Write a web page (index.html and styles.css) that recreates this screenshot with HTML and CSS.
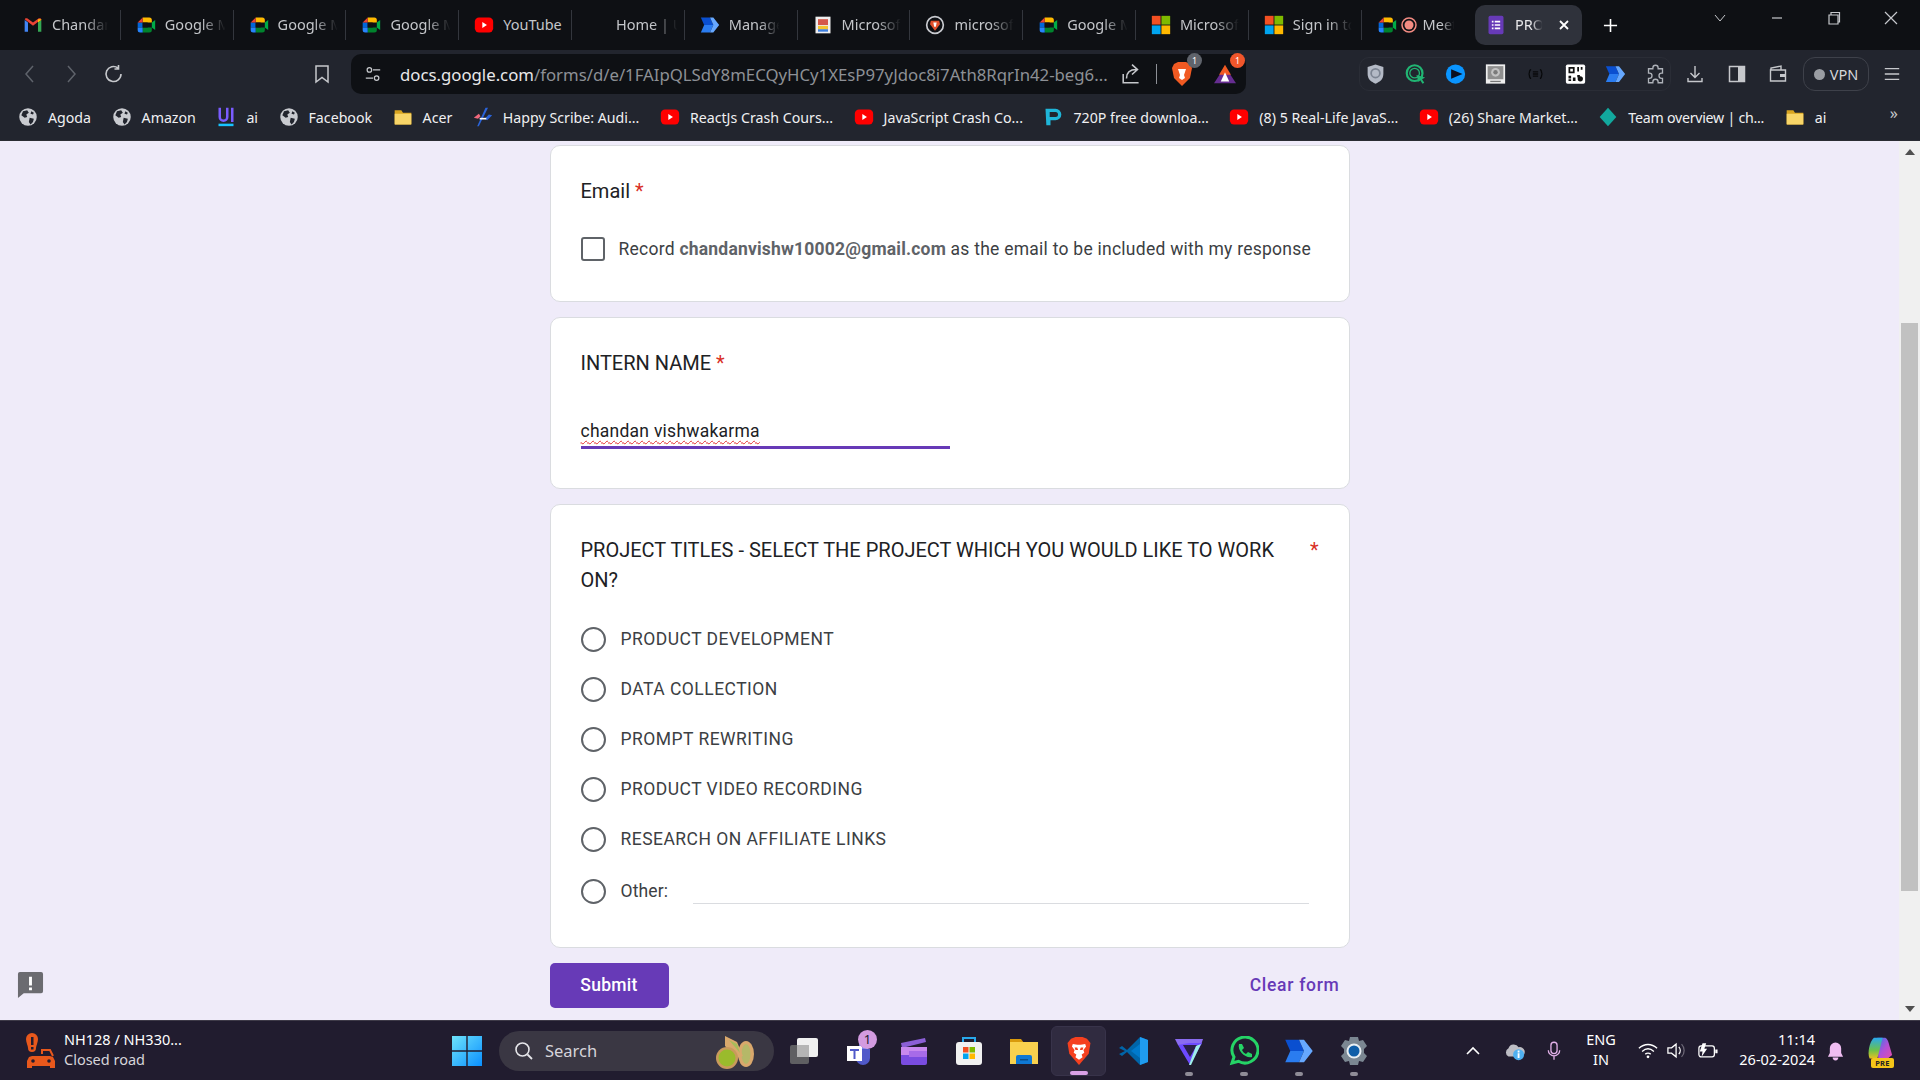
FILE: index.html
```html
<!DOCTYPE html>
<html lang="en">
<head>
<meta charset="utf-8">
<title>PROJECT form</title>
<link rel="stylesheet" href="styles.css">
</head>
<body>
<svg class="defs" width="0" height="0" aria-hidden="true">
  <defs>
    <symbol id="meet" viewBox="0 0 24 24"><path fill="#00832d" d="M13 9v6h6v3a3 3 0 0 1-3 3H8v-6h5z"/><path fill="#0066da" d="M2 9h6v6H2z"/><path fill="#2684fc" d="M2 15h6v6H5a3 3 0 0 1-3-3z"/><path fill="#ffba00" d="M8 3h8a3 3 0 0 1 3 3v3h-6v0H8z"/><path fill="#ea4335" d="M8 3v6H2z"/><path fill="#00ac47" d="M19 9l4-3v12l-4-3z"/><path fill="#111" d="M8 9h6v6H8z"/></symbol>
    <symbol id="yt" viewBox="0 0 24 24"><rect x="1" y="3" width="22" height="18" rx="5" fill="#f00"/><path d="M10 8.500l5.500 3.500-5.500 3.500z" fill="#fff"/></symbol>
    <symbol id="ms" viewBox="0 0 24 24"><path fill="#f25022" d="M1 1h10.500v10.500H1z"/><path fill="#7fba00" d="M12.500 1H23v10.500H12.500z"/><path fill="#00a4ef" d="M1 12.500h10.500V23H1z"/><path fill="#ffb900" d="M12.500 12.500H23V23H12.500z"/></symbol>
    <symbol id="pa" viewBox="0 0 24 24"><path fill="#0a4fd0" d="M1 3h11l4 9H5z"/><path fill="#2a7cf0" d="M5 12h11l-4 9H1z"/><path fill="#66a8ff" d="M12 3h4l7 9-7 9h-4l4-9z"/></symbol>
    <symbol id="globe" viewBox="0 0 24 24"><circle cx="12" cy="12" r="10.500" fill="#c9cbd0"/><path fill="#22252e" d="M6 5l5-1 2 3-3 2 1 3-3 1-4-3zM14 13l5 1-1 4-3 3-2-3zM16 5l3 2-1 2-3-1z"/></symbol>
    <symbol id="folder" viewBox="0 0 24 24"><path fill="#d9a520" d="M2 4h8l2 3h10v14H2z"/><path fill="#f8d568" d="M2 8h20v12a1 1 0 0 1-1 1H3a1 1 0 0 1-1-1z"/></symbol>
  </defs>
</svg>
<div class="app">
  <header class="tabstrip">
    <div class="tabs">
      <div class="tab"><svg class="tab-ico" viewBox="0 0 24 24"><path fill="#4285f4" d="M2 20V6l4 3v11z"/><path fill="#34a853" d="M18 20V9l4-3v14z"/><path fill="#ea4335" d="M2 5l10 8 10-8-1-1-2 0-7 5-7-5H3z"/><path fill="#fbbc04" d="M18 9l4-3V5l-4 0z"/></svg><span class="tab-label">Chandan</span></div>
      <div class="tab"><svg class="tab-ico"><use href="#meet"/></svg><span class="tab-label">Google M</span></div>
      <div class="tab"><svg class="tab-ico"><use href="#meet"/></svg><span class="tab-label">Google M</span></div>
      <div class="tab"><svg class="tab-ico"><use href="#meet"/></svg><span class="tab-label">Google M</span></div>
      <div class="tab"><svg class="tab-ico"><use href="#yt"/></svg><span class="tab-label tab-label-solid">YouTube</span></div>
      <div class="tab"><span class="tab-ico"></span><span class="tab-label">Home | U</span></div>
      <div class="tab"><svg class="tab-ico"><use href="#pa"/></svg><span class="tab-label">Manage</span></div>
      <div class="tab"><svg class="tab-ico" viewBox="0 0 24 24"><path fill="#eee" d="M3 2h18v20H3z"/><path fill="#d5584a" d="M6 5h12v7H6z"/><path fill="#3c7ee0" d="M6 17h12v3H6z"/><path fill="#f4c430" d="M6 13h12v4H6z"/></svg><span class="tab-label">Microsoft</span></div>
      <div class="tab"><svg class="tab-ico" viewBox="0 0 24 24"><circle cx="12" cy="12" r="10" fill="none" stroke="#c9cbd0" stroke-width="2"/><path fill="#e2502b" d="M7 7h10l1 4-6 8-6-8z"/><path fill="#fff" d="M10 9h4l-1 5h-2z"/></svg><span class="tab-label">microsoft</span></div>
      <div class="tab"><svg class="tab-ico"><use href="#meet"/></svg><span class="tab-label">Google M</span></div>
      <div class="tab"><svg class="tab-ico"><use href="#ms"/></svg><span class="tab-label">Microsoft</span></div>
      <div class="tab"><svg class="tab-ico"><use href="#ms"/></svg><span class="tab-label">Sign in to</span></div>
      <div class="tab tab-rec"><svg class="tab-ico"><use href="#meet"/></svg><svg class="tab-rec-dot" viewBox="0 0 16 16"><circle cx="8" cy="8" r="7" fill="none" stroke="#f28b82" stroke-width="1.500"/><circle cx="8" cy="8" r="4.500" fill="#f28b82"/></svg><span class="tab-label">Meet</span></div>
    </div>
    <div class="tab-active">
      <svg class="tab-ico" viewBox="0 0 24 24"><rect x="3" y="1" width="18" height="22" rx="2" fill="#673ab7"/><path fill="#fff" d="M7 7h2v2H7zM10.500 7H17v2h-6.500zM7 11h2v2H7zM10.500 11H17v2h-6.500zM7 15h2v2H7zM10.500 15H17v2h-6.500z"/></svg>
      <span class="tab-label tab-label-active">PRO</span>
      <svg class="tab-close" viewBox="0 0 12 12"><path d="M2 2l8 8M10 2l-8 8" stroke="#fff" stroke-width="1.800"/></svg>
    </div>
    <svg class="tab-new" viewBox="0 0 16 16"><path d="M8 1v14M1 8h14" stroke="#fff" stroke-width="1.700"/></svg>
    <div class="win-ctrls">
      <svg viewBox="0 0 16 16"><path d="M3 5l5 6 5-6" fill="none" stroke="#c6c8cc" stroke-width="1"/></svg>
      <svg viewBox="0 0 16 16"><path d="M3 8h10" stroke="#c6c8cc" stroke-width="1.200"/></svg>
      <svg viewBox="0 0 16 16"><path d="M3 5h9v9H3zM5 5V2.500h8.500V12H12" fill="none" stroke="#c6c8cc" stroke-width="1.200"/></svg>
      <svg viewBox="0 0 16 16"><path d="M2 2l12 12M14 2L2 14" stroke="#c6c8cc" stroke-width="1.200"/></svg>
    </div>
  </header>

  <nav class="toolbar">
    <div class="nav-btns">
      <svg class="nav-ico dim" viewBox="0 0 20 20"><path d="M13 2l-7 8 7 8" fill="none" stroke="currentColor" stroke-width="1.500"/></svg>
      <svg class="nav-ico dim" viewBox="0 0 20 20"><path d="M7 2l7 8-7 8" fill="none" stroke="currentColor" stroke-width="1.500"/></svg>
      <svg class="nav-ico reload" viewBox="0 0 20 20"><path d="M17 10a7.500 7.500 0 1 1-3-6M14.500 1v4h-4" fill="none" stroke="currentColor" stroke-width="1.600"/></svg>
    </div>
    <svg class="nav-ico bookmark" viewBox="0 0 20 20"><path d="M4 2h12v16l-6-4.500L4 18z" fill="none" stroke="currentColor" stroke-width="1.500"/></svg>
    <div class="omnibox">
      <svg class="site-ico" viewBox="0 0 20 20"><g fill="none" stroke="#c6c8cc" stroke-width="1.400"><circle cx="6" cy="5.500" r="2.500"/><path d="M10 5.500h8M2 14.500h8"/><circle cx="14" cy="14.500" r="2.500"/></g></svg>
      <div class="url"><span class="url-host">docs.google.com</span>/forms/d/e/1FAIpQLSdY8mECQyHCy1XEsP97yJdoc8i7Ath8RqrIn42-beg6...</div>
      <svg class="omni-share" viewBox="0 0 20 20"><path d="M2 10v8h14M5 14c0-5 3-8 9-8M10 1.500l5 4.500-5 4.500" fill="none" stroke="#c6c8cc" stroke-width="1.400"/></svg>
      <span class="omni-sep"></span>
      <div class="shield-wrap">
        <svg class="omni-shield" viewBox="0 0 22 26"><path fill="#f15a22" d="M3 3l4-2h8l4 2 2 4-2 10-8 8-8-8L1 7z"/><path fill="#fff" d="M7 8h8l-2 6 1 3-3 2-3-2 1-3z"/></svg>
        <span class="badge badge-grey">1</span>
      </div>
      <div class="shield-wrap">
        <svg class="omni-shield" viewBox="0 0 26 26"><path fill="#662d91" d="M13 4L26 24H0z"/><path fill="#f15a22" d="M13 2L20 14H6z"/><path fill="#fff" d="M13 11l5 11H8z"/></svg>
        <span class="badge badge-red">1</span>
      </div>
    </div>
    <div class="ext-group">
      <svg class="ext" viewBox="0 0 24 24"><path fill="#b4bac6" d="M12 1l9 3v8c0 6-4 9-9 11-5-2-9-5-9-11V4z"/><circle cx="12" cy="11" r="5" fill="none" stroke="#7c8492" stroke-width="2"/></svg>
      <svg class="ext" viewBox="0 0 24 24"><circle cx="11" cy="11" r="9" fill="none" stroke="#21b573" stroke-width="2.500"/><circle cx="11" cy="11" r="5.500" fill="none" stroke="#21b573" stroke-width="1.500"/><path fill="#21b573" d="M13 13l10 3-3.500 2 2.500 4-2 1-2.500-4-2 2z"/></svg>
      <svg class="ext" viewBox="0 0 24 24"><circle cx="12" cy="12" r="11" fill="#0a95ff"/><path fill="#0b1020" d="M7 6.500L20 12 7 17.500z"/></svg>
      <svg class="ext" viewBox="0 0 24 24"><rect x="1" y="1" width="22" height="22" fill="#eeeeee"/><rect x="3" y="3" width="18" height="15" fill="#8f8f8f"/><circle cx="12" cy="10" r="5" fill="#c2c2c2"/><circle cx="12" cy="10" r="2.500" fill="#7a7a7a"/><path d="M6 20.500h12" stroke="#777" stroke-width="1.500"/></svg>
      <svg class="ext" viewBox="0 0 24 24"><path d="M7 7c-3 0-1 5-3 5 2 0 0 5 3 5M17 7c3 0 1 5 3 5-2 0 0 5-3 5M9 9.500h6M9 12h6M9 14.500h6" fill="none" stroke="#08090b" stroke-width="1.500"/></svg>
      <svg class="ext" viewBox="0 0 24 24"><rect x="1" y="1" width="22" height="22" rx="2" fill="#fff"/><path fill="#111" fill-rule="evenodd" d="M4 4h7v7H4zM6 6v3h3V6zM14 4h2v5h-2zM18 4h2v3h-2zM4 14h3v3H4zM9 16h3v4H9zM4 18h3v2H4zM14 13h3v3h-3z"/><circle cx="17.500" cy="17.500" r="3" fill="#111"/></svg>
      <svg class="ext"><use href="#pa"/></svg>
      <svg class="ext" viewBox="0 0 24 24"><path d="M9 5a3 3 0 0 1 6 0v1h5v5h-1a3 3 0 0 0 0 6h1v5h-5v-1a3 3 0 0 0-6 0v1H4v-5h1a3 3 0 0 0 0-6H4V6h5z" fill="none" stroke="#aeb2b9" stroke-width="1.500"/></svg>
    </div>
    <div class="tool-icons">
      <svg class="tool" viewBox="0 0 20 20"><path d="M10 2v11M5.500 9l4.500 4.500L14.500 9M3 14v3.500h14V14" fill="none" stroke="#c6c8cc" stroke-width="1.400"/></svg>
      <svg class="tool" viewBox="0 0 20 20"><rect x="2.500" y="2.500" width="15" height="15" fill="none" stroke="#c6c8cc" stroke-width="1.500"/><path fill="#c6c8cc" d="M11 3h6v14h-6z"/></svg>
      <svg class="tool" viewBox="0 0 20 20"><path d="M3 6V4l10-2v4M2.500 6h15v11h-15z" fill="none" stroke="#c6c8cc" stroke-width="1.400"/><path fill="#c6c8cc" d="M12 10h5v3h-5z"/></svg>
    </div>
    <div class="vpn"><span class="vpn-dot"></span>VPN</div>
    <svg class="menu" viewBox="0 0 20 20"><path d="M2 4h16M2 10h16M2 16h16" stroke="#c6c8cc" stroke-width="1.500"/></svg>
  </nav>

  <nav class="bookmarks">
    <a class="bm"><svg><use href="#globe"/></svg>Agoda</a>
    <a class="bm"><svg><use href="#globe"/></svg>Amazon</a>
    <a class="bm"><svg viewBox="0 0 24 24"><path fill="#7a5cff" d="M3 1h3v11a2 2 0 0 0 6 0V1h3v11a5 5 0 0 1-12 0zM18 1h3v17h-3z"/><path fill="#17c3ff" d="M3 20h18v3H3z"/></svg>ai</a>
    <a class="bm"><svg><use href="#globe"/></svg>Facebook</a>
    <a class="bm"><svg><use href="#folder"/></svg>Acer</a>
    <a class="bm"><svg viewBox="0 0 24 24"><path fill="#f2697d" d="M1 13l6-5 2 3-3 3z"/><path fill="#2a63d8" d="M15 1h3L7 23H5zM23 10l-6 6-3-2 5-5z"/><path fill="#fff" d="M8 13h8v2H8z"/></svg>Happy Scribe: Audi...</a>
    <a class="bm"><svg><use href="#yt"/></svg>ReactJs Crash Cours...</a>
    <a class="bm"><svg><use href="#yt"/></svg>JavaScript Crash Co...</a>
    <a class="bm"><svg viewBox="0 0 24 24"><path fill="#1fb6d9" d="M3 2h12a7 7 0 0 1 0 14H9v6H4z"/><path fill="#22252e" d="M8 6h7a3 3 0 0 1 0 6H8z"/></svg>720P free downloa...</a>
    <a class="bm"><svg><use href="#yt"/></svg>(8) 5 Real-Life JavaS...</a>
    <a class="bm"><svg><use href="#yt"/></svg>(26) Share Market...</a>
    <a class="bm bm-tight"><svg viewBox="0 0 24 24"><path fill="#12a89d" d="M12 1l10 11-10 11L2 12z"/></svg>Team overview | ch...</a>
    <a class="bm"><svg><use href="#folder"/></svg>ai</a>
    <span class="bm-more">»</span>
  </nav>

  <main class="viewport">
    <div class="page">
      <div class="form">
        <section class="card">
          <h2 class="q">Email <span class="req">*</span></h2>
          <div class="record">
            <span class="checkbox"></span>
            <span>Record <b class="mail">chandanvishw10002@gmail.com</b> as the email to be included with my response</span>
          </div>
        </section>
        <section class="card card-name">
          <h2 class="q">INTERN NAME <span class="req">*</span></h2>
          <div class="answer"><span class="spell">chandan vishwakarma</span></div>
        </section>
        <section class="card card-project">
          <div class="q-row">
            <h2 class="q q-long">PROJECT TITLES - SELECT THE PROJECT WHICH YOU WOULD LIKE TO WORK ON?</h2>
            <span class="req req-far">*</span>
          </div>
          <div class="opts">
            <div class="opt"><span class="radio"></span>PRODUCT DEVELOPMENT</div>
            <div class="opt"><span class="radio"></span>DATA COLLECTION</div>
            <div class="opt"><span class="radio"></span>PROMPT REWRITING</div>
            <div class="opt"><span class="radio"></span>PRODUCT VIDEO RECORDING</div>
            <div class="opt"><span class="radio"></span>RESEARCH ON AFFILIATE LINKS</div>
            <div class="opt opt-other"><span class="radio"></span>Other:<span class="other-line"></span></div>
          </div>
        </section>
        <div class="actions">
          <button class="submit" type="button">Submit</button>
          <span class="clear">Clear form</span>
        </div>
      </div>
      <svg class="feedback" viewBox="0 0 28 28"><path fill="#6b6b70" d="M3 1h22a2 2 0 0 1 2 2v18a2 2 0 0 1-2 2H7l-6 5V3a2 2 0 0 1 2-2z"/><path fill="#fff" d="M12.500 6h3v9h-3zM12.500 17h3v3h-3z"/></svg>
    </div>
    <div class="scrollbar">
      <svg class="sb-arrow" viewBox="0 0 10 6"><path d="M5 0l5 6H0z" fill="#505050"/></svg>
      <div class="sb-track"><div class="sb-thumb"></div></div>
      <svg class="sb-arrow" viewBox="0 0 10 6"><path d="M0 0h10L5 6z" fill="#505050"/></svg>
    </div>
  </main>

  <footer class="taskbar">
    <div class="tb-left">
      <div class="traffic">
        <svg class="traffic-ico" viewBox="0 0 32 38"><path fill="#e8581c" d="M8 1a6 6 0 0 1 6 6c0 3-2 7-2 9a4 4 0 0 1-8 0c0-2-2-6-2-9a6 6 0 0 1 6-6z"/><path fill="#211c2f" d="M7 5h2.500v8H7zM7 15h2.500v2.500H7z"/><path fill="#e8581c" d="M5 25l3-1h18l3 1 2 4v7h-5v-2H8v2H3v-7z"/><path fill="none" stroke="#e8581c" stroke-width="2" d="M18 22v-4h8l3 6"/><circle cx="9" cy="29" r="1.800" fill="#211c2f"/><circle cx="25" cy="29" r="1.800" fill="#211c2f"/></svg>
        <div class="traffic-text"><div class="traffic-t1">NH128 / NH330...</div><div class="traffic-t2">Closed road</div></div>
      </div>
    </div>
    <div class="tb-center">
      <svg class="win" viewBox="0 0 30 30"><defs><linearGradient id="w" x1="0" y1="0" x2="1" y2="1"><stop offset="0" stop-color="#6ee3fb"/><stop offset="1" stop-color="#0a8fff"/></linearGradient></defs><path fill="url(#w)" d="M0 0h14.300v14.300H0zM15.700 0H30v14.300H15.700zM0 15.700h14.300V30H0zM15.700 15.700H30V30H15.700z"/></svg>
      <div class="search">
        <svg class="search-ico" viewBox="0 0 20 20"><circle cx="8.500" cy="8.500" r="6.500" fill="none" stroke="#e6e6ea" stroke-width="1.600"/><path d="M13.500 13.500L18 18" stroke="#e6e6ea" stroke-width="1.800"/></svg>
        <span class="search-text">Search</span>
        <svg class="search-art" viewBox="0 0 48 36"><ellipse cx="35" cy="21" rx="8" ry="13" fill="#d9a86c"/><ellipse cx="35" cy="21" rx="4.500" ry="10" fill="#b5b868"/><path fill="#d9a86c" d="M14 3l12 6 6 14-6 2-12-12z"/><path fill="#a6bc5a" d="M18 7l8 4 3 9z"/><circle cx="16" cy="25" r="11" fill="#c99a5c"/><circle cx="16" cy="25" r="8.500" fill="#9abb2c"/></svg>
      </div>
      <div class="apps">
        <div class="app-slot"><svg viewBox="0 0 30 30"><rect x="1" y="9" width="19" height="19" rx="2" fill="#5f5f62"/><rect x="8" y="2" width="21" height="19" rx="2" fill="#f0f0f0"/><rect x="8" y="9" width="12" height="12" fill="#b5b5b5"/></svg></div>
        <div class="app-slot app-teams"><svg viewBox="0 0 30 30"><circle cx="20" cy="9" r="5" fill="#7b83eb"/><path fill="#5059c9" d="M12 13h14v9a7 7 0 0 1-14 0z"/><rect x="3" y="10" width="15" height="15" fill="#fff"/><path fill="#5059c9" d="M6 13h9v2h-3.500v8h-2v-8H6z"/></svg><span class="teams-badge">1</span></div>
        <div class="app-slot"><svg viewBox="0 0 30 30"><path fill="#8b5fd6" d="M2 7l24-5 1 4L3 12z"/><path fill="#c889ee" d="M2 11h26v8H2z"/><path fill="#7a4ce0" d="M2 19h26v8a2 2 0 0 1-2 2H4a2 2 0 0 1-2-2z"/><path fill="#a76be8" d="M10 15h18v6H10z"/></svg></div>
        <div class="app-slot"><svg viewBox="0 0 30 30"><path fill="none" stroke="#28a8ea" stroke-width="2" d="M9 7V2h12v5"/><rect x="2" y="6" width="26" height="23" rx="3" fill="#f1f1f1"/><path fill="#f25022" d="M9 11h5.500v5.500H9z"/><path fill="#7fba00" d="M15.500 11H21v5.500h-5.500z"/><path fill="#00a4ef" d="M9 17.500h5.500V23H9z"/><path fill="#ffb900" d="M15.500 17.500H21V23h-5.500z"/></svg></div>
        <div class="app-slot"><svg viewBox="0 0 30 30"><path fill="#d99a0c" d="M1 3h11l3 4h-14z"/><path fill="#f9d14e" d="M1 6h28v22H1z"/><path fill="#0f78d4" d="M9 19h12a2 2 0 0 1 2 2v7H7v-7a2 2 0 0 1 2-2z"/><path fill="#0b4f8c" d="M11 23h8v1.500h-8z"/></svg></div>
        <div class="app-slot is-active"><svg viewBox="0 0 30 34"><path fill="#f5401f" d="M6 3l5-2h8l5 2 4 5-2 12-11 13L4 20 2 8z"/><path fill="#fff" d="M8 9l5 1h4l5-1 1 3-3 4 1 3-3 2 1 3-4 3-4-3 1-3-3-2 1-3-3-4z"/><path fill="#f5401f" d="M10 13h3l1 3h-3zM20 13h-3l-1 3h3z"/></svg><span class="dot dot-active"></span></div>
        <div class="app-slot"><svg viewBox="0 0 30 30"><path fill="#0065a9" d="M21 1L8 14 3 10 0 12l6 3-6 3 3 2 5-4 13 13 8-3V4z"/><path fill="#1f9cf0" d="M21 1l8 3v22l-8 3z"/><path fill="#007acc" d="M21 8v14l-9-7z"/></svg></div>
        <div class="app-slot"><svg viewBox="0 0 30 30"><path fill="#8a6cf0" d="M1 3h28l-2 6H4z"/><path fill="#6d4aff" d="M4 9l11-2 13 0-12 22z"/><path fill="#2a1f4a" d="M9 9h14l-7 12z"/><path fill="#9fefe9" d="M22 10l5-2-10 21h-2z"/></svg><span class="dot"></span></div>
        <div class="app-slot"><svg viewBox="0 0 30 30"><path fill="none" stroke="#25d366" stroke-width="3" d="M3 27l2-6a13 13 0 1 1 4.500 4.300z"/><path fill="#25d366" d="M10 8h3l2 4-2 2c1 2 2 3 4 4l2-2 4 2v3c-6 2-15-6-13-13z"/></svg><span class="dot"></span></div>
        <div class="app-slot"><svg viewBox="0 0 24 24"><use href="#pa"/></svg><span class="dot"></span></div>
        <div class="app-slot"><svg viewBox="0 0 30 30"><path fill="#7b8792" d="M11 1h8l1 4 4-1 4 6-3 3v4l3 3-4 6-4-1-1 4h-8l-1-4-4 1-4-6 3-3v-4L2 10l4-6 4 1z"/><circle cx="15" cy="15" r="7.500" fill="#e8eef2"/><circle cx="15" cy="15" r="5.500" fill="#0f5ea8"/></svg><span class="dot"></span></div>
      </div>
    </div>
    <div class="tb-tray">
      <svg class="tray-ico chev" viewBox="0 0 16 16"><path d="M2 11l6-6 6 6" fill="none" stroke="#fff" stroke-width="1.600"/></svg>
      <div class="tray-cloud"><svg class="tray-ico" viewBox="0 0 24 20"><path fill="#bdbdc4" d="M6 16a5 5 0 0 1 0-9 6 6 0 0 1 11-1 5 5 0 0 1 3 10z"/><circle cx="17" cy="14" r="6" fill="#4fb0f0"/><path fill="#fff" d="M16 9.500h2v2h-2zM16 12.500h2v5h-2z"/></svg></div>
      <svg class="tray-ico mic" viewBox="0 0 16 22"><rect x="4.500" y="1" width="7" height="13" rx="3.500" fill="none" stroke="#e2b0e8" stroke-width="1.500"/><path d="M1.500 10a6.500 6.500 0 0 0 13 0M8 17v4" fill="none" stroke="#e2b0e8" stroke-width="1.500"/></svg>
      <div class="lang"><div>ENG</div><div>IN</div></div>
      <svg class="tray-ico wifi" viewBox="0 0 22 18"><path d="M1 6.500c6-5.500 14-5.500 20 0M4.500 10c4-3.500 9-3.500 13 0M8 13c2-1.500 4-1.500 6 0" fill="none" stroke="#fff" stroke-width="1.500"/><circle cx="11" cy="16" r="1.500" fill="#fff"/></svg>
      <svg class="tray-ico vol" viewBox="0 0 22 18"><path d="M1 6h4l5-4v14l-5-4H1z" fill="none" stroke="#fff" stroke-width="1.400"/><path d="M13 5a6 6 0 0 1 0 8" fill="none" stroke="#fff" stroke-width="1.400"/><path d="M16 2a10 10 0 0 1 0 14" fill="none" stroke="#6b6675" stroke-width="1.400"/></svg>
      <svg class="tray-ico batt" viewBox="0 0 22 18"><rect x="1" y="4" width="17" height="12" rx="2.500" fill="none" stroke="#fff" stroke-width="1.400"/><path fill="#fff" d="M19 8h2.500v4H19zM5 1l-3 9h3l-1 6 6-9H7l2-6z"/></svg>
      <div class="clock"><div>11:14</div><div>26-02-2024</div></div>
      <svg class="tray-ico bell" viewBox="0 0 18 20"><path fill="#f0bdf2" d="M9 1a6 6 0 0 1 6 6v5l2 4H1l2-4V7a6 6 0 0 1 6-6z"/><path fill="#f0bdf2" d="M6 17h6a3 3 0 0 1-6 0z"/></svg>
      <div class="copilot">
        <svg viewBox="0 0 30 30"><defs><linearGradient id="c" x1="0" y1="0" x2="0" y2="1"><stop offset="0" stop-color="#28a8f0"/><stop offset=".6" stop-color="#6cc24a"/><stop offset="1" stop-color="#e8c020"/></linearGradient><linearGradient id="c2" x1="0" y1="0" x2="1" y2="1"><stop offset="0" stop-color="#2f7be8"/><stop offset=".5" stop-color="#b050d8"/><stop offset="1" stop-color="#e24fa8"/></linearGradient></defs><path fill="url(#c2)" d="M12 2h8c3 0 4 3 5 6l4 14-5 4H13z"/><path fill="url(#c)" d="M8 2h10l-6 24H3C0 20 3 6 8 2z"/></svg>
        <span class="pre">PRE</span>
      </div>
    </div>
  </footer>
</div>
</body>
</html>
```
FILE: styles.css
```css
* { box-sizing: border-box; }
html, body { margin: 0; padding: 0; height: 100%; overflow: hidden; }
body { font-family: "Noto Sans", "Open Sans", sans-serif; background: #efebf9; }
.defs { position: absolute; }
.app { width: 1920px; height: 1080px; display: flex; flex-direction: column; }

/* tab strip */
.tabstrip { height: 50px; background: #0e1014; display: flex; align-items: center; padding-left: 8px; flex: none; }
.tabs { display: flex; width: 1467px; flex: none; }
.tab { width: 112.800px; height: 30px; display: flex; align-items: center; padding-left: 15px; border-right: 1px solid #33363d; overflow: hidden; flex: none; gap: 9px; }
.tab:nth-child(13) { border-right: 0; }
.tab-ico { width: 20px; height: 20px; flex: none; display: block; }
.tab-label { font-size: 14.500px; color: #c4c6ca; white-space: nowrap; flex: none; padding-bottom: 2px; -webkit-mask-image: linear-gradient(90deg, #000 55%, transparent 92%); mask-image: linear-gradient(90deg, #000 55%, transparent 92%); }
.tab-label-solid { -webkit-mask-image: none; mask-image: none; }
.tab-rec { gap: 4px; }
.tab-rec-dot { width: 16px; height: 16px; flex: none; margin-right: 2px; }
.tab-active { width: 107px; height: 40px; background: #2f323b; border-radius: 10px; display: flex; align-items: center; padding-left: 11px; gap: 9px; flex: none; }
.tab-label-active { color: #e8e8ea; width: 30px; }
.tab-close { width: 12px; height: 12px; flex: none; margin-left: 4px; }
.tab-new { width: 15px; height: 15px; margin-left: 21px; flex: none; }
.win-ctrls { display: flex; margin-left: auto; margin-right: 21px; gap: 41px; padding-bottom: 14px; }
.win-ctrls svg { width: 16px; height: 16px; display: block; }

/* toolbar */
.toolbar { height: 48px; background: #22252e; display: flex; align-items: center; flex: none; padding-left: 20px; }
.nav-btns { display: flex; gap: 21px; width: 292px; flex: none; }
.nav-ico { width: 20px; height: 20px; color: #c6c8cc; flex: none; display: block; }
.nav-ico.dim { color: #5f636b; }
.reload { margin-left: 2px; }
.bookmark { width: 20px; height: 22px; flex: none; }
.omnibox { width: 895px; height: 40px; margin-left: 19px; background: #0e1014; border-radius: 10px; display: flex; align-items: center; padding-left: 13px; flex: none; }
.site-ico { width: 18px; height: 18px; flex: none; }
.url { font-size: 16.750px; color: #8d9096; margin-left: 18px; width: 704px; flex: none; white-space: nowrap; }
.url-host { color: #e8e8ea; }
.omni-share { width: 22px; height: 22px; margin-left: 17px; flex: none; }
.omni-sep { width: 1px; height: 20px; background: #8d9096; margin-left: 13px; flex: none; }
.shield-wrap { position: relative; margin-left: 14px; width: 22px; display: flex; flex: none; }
.shield-wrap + .shield-wrap { margin-left: 21px; }
.omni-shield { width: 22px; height: 26px; display: block; }
.badge { position: absolute; top: -8px; right: -9px; width: 15px; height: 15px; border-radius: 50%; font-size: 9px; line-height: 15px; text-align: center; color: #fff; }
.badge-grey { background: #5f636b; }
.badge-red { background: #f1562b; }
.ext-group { width: 312px; height: 34px; margin-left: 113px; border: 1px solid #2a2d36; border-radius: 10px; display: flex; align-items: center; justify-content: space-between; padding: 0 4.500px; flex: none; }
.ext { width: 21px; height: 24px; display: block; flex: none; }
.tool-icons { display: flex; gap: 21.500px; margin-left: 14px; flex: none; }
.tool { width: 20px; height: 22px; display: block; }
.vpn { width: 66px; height: 34px; margin-left: 15px; border: 1px solid #3e414a; border-radius: 12px; display: flex; align-items: center; justify-content: center; gap: 5px; color: #d6d7da; font-size: 14.500px; flex: none; }
.vpn-dot { width: 11px; height: 11px; border-radius: 50%; background: #9a9da3; }
.menu { width: 18px; height: 18px; margin-left: 14px; flex: none; }

/* bookmarks */
.bookmarks { height: 43px; background: #22252e; display: flex; align-items: center; flex: none; padding: 0 0 4px 18px; gap: 20.500px; border-bottom: 1px solid #2a2c33; position: relative; }
.bm { display: flex; align-items: center; gap: 10px; height: 30px; color: #f0f0f2; font-size: 14.200px; white-space: nowrap; flex: none; }
.bm svg { width: 20px; height: 20px; flex: none; display: block; }
.bm-tight { letter-spacing: -.25px; }
.bm-more { position: absolute; right: 22px; top: 4px; color: #c6c8cc; font-size: 16px; }

/* page */
.viewport { flex: 1; min-height: 0; display: flex; background: #efebf9; }
.page { flex: 1; min-width: 0; display: flex; justify-content: center; position: relative; }
.form { width: 800px; padding-top: 4px; display: flex; flex-direction: column; gap: 15px; }
.card { background: #fff; border: 1px solid #dadce0; border-radius: 10px; padding: 30px 30px 0; color: #202124; height: 157px; flex: none; }
.card-name { height: 172px; }
.card-project { height: 444px; }
.q { font: 400 20px/30px Roboto, sans-serif; margin: 0; color: #202124; }
.req { color: #d93025; }
.record { display: flex; align-items: center; gap: 14px; margin-top: 31px; font: 400 17.500px/24px Roboto, sans-serif; color: #3c4043; white-space: nowrap; letter-spacing: .25px; }
.mail { font-weight: 700; color: #5f6368; letter-spacing: .2px; }
.checkbox { width: 24px; height: 24px; border: 2.500px solid #5f6368; border-radius: 3px; flex: none; }
.answer { margin-top: 29px; width: 369px; height: 42px; border-bottom: 3px solid #673ab7; font: 400 17.500px/24px Roboto, sans-serif; letter-spacing: .25px; color: #202124; padding-top: 12px; }
.spell { text-decoration: underline wavy #e53030 1px; text-underline-offset: 3px; }
.q-row { display: flex; justify-content: space-between; }
.q-long { width: 715px; }
.req-far { font: 400 20px/30px Roboto, sans-serif; }
.opts { margin-top: 19px; display: flex; flex-direction: column; }
.opt { height: 50px; display: flex; align-items: center; font: 400 17.500px/24px Roboto, sans-serif; color: #3c4043; gap: 15px; letter-spacing: .47px; }
.radio { width: 25px; height: 25px; border: 2.500px solid #5f6368; border-radius: 50%; flex: none; }
.opt-other { height: 54px; letter-spacing: .15px; }
.other-line { flex: none; width: 616px; height: 1px; background: #dadce0; align-self: flex-end; margin-left: 10px; margin-bottom: 14px; }
.actions { display: flex; justify-content: space-between; align-items: center; height: 45px; padding-right: 10px; flex: none; }
.submit { width: 119px; height: 45px; background: #673ab7; color: #fff; border: 0; border-radius: 5px; font: 500 17.500px Roboto, sans-serif; letter-spacing: .3px; padding: 0 0 2px; }
.clear { color: #673ab7; font: 500 17.500px Roboto, sans-serif; letter-spacing: .7px; padding-bottom: 2px; }
.feedback { position: absolute; left: 17px; bottom: 22px; width: 27px; height: 27px; }
.scrollbar { width: 21px; background: #f0f0f0; flex: none; display: flex; flex-direction: column; align-items: center; padding: 8px 0; }
.sb-arrow { width: 10px; height: 6px; flex: none; }
.sb-track { flex: 1; width: 100%; padding: 0 2px; }
.sb-thumb { height: 568px; margin-top: 168px; background: #c1c1c1; }

/* taskbar */
.taskbar { height: 60px; background: #211c2f; border-top: 1px solid #3e3a48; position: relative; flex: none; display: flex; align-items: center; }
.tb-left { width: 450px; flex: none; padding-left: 24px; }
.traffic { display: flex; align-items: center; gap: 8px; }
.traffic-ico { width: 32px; height: 38px; flex: none; }
.traffic-text { font-size: 14.500px; line-height: 20px; color: #fff; padding-bottom: 4px; }
.traffic-t2 { color: #d6d4da; }
.tb-center { display: flex; align-items: center; flex: none; }
.win { width: 30px; height: 30px; flex: none; margin-left: 2px; }
.search { width: 275px; height: 40px; margin-left: 17px; background: #3a3743; border-radius: 20px; display: flex; align-items: center; padding-left: 15px; flex: none; }
.search-ico { width: 20px; height: 20px; flex: none; }
.search-text { margin-left: 11px; font-size: 16.500px; color: #d6d4da; }
.search-art { width: 48px; height: 36px; margin-left: auto; margin-right: 15px; }
.apps { display: flex; margin-left: 2px; }
.app-slot { width: 55px; height: 50px; display: flex; align-items: center; justify-content: center; position: relative; flex: none; }
.app-slot svg { width: 30px; height: 30px; display: block; }
.is-active { background: #302b40; border: 1px solid #38334a; border-radius: 6px; }
.dot { position: absolute; bottom: 0; left: 50%; width: 8px; height: 4px; margin-left: -4px; border-radius: 2px; background: #8f8c97; }
.dot-active { width: 18px; margin-left: -9px; background: #d9a0e6; }
.teams-badge { position: absolute; top: 4px; right: 9px; width: 19px; height: 19px; border-radius: 50%; background: #d39be0; color: #211c2f; font-size: 13px; line-height: 19px; text-align: center; }
.tb-tray { position: absolute; right: 0; top: 0; bottom: 0; left: 1450px; display: flex; align-items: center; }
.tray-ico { display: block; flex: none; }
.chev { width: 16px; height: 16px; margin-left: 15px; }
.tray-cloud { margin-left: 22px; flex: none; }
.tray-cloud svg { width: 22px; height: 20px; }
.mic { width: 14px; height: 22px; margin-left: 22px; }
.lang { width: 48px; margin-left: 16px; text-align: center; font-size: 14.500px; line-height: 20px; color: #fff; flex: none; padding-bottom: 3px; }
.wifi { width: 20px; height: 17px; margin-left: 13px; }
.vol { width: 20px; height: 17px; margin-left: 9px; }
.batt { width: 20px; height: 17px; margin-left: 11px; }
.clock { width: 90px; margin-left: 7px; text-align: right; font-size: 14.500px; line-height: 20px; color: #fff; flex: none; padding-bottom: 3px; }
.bell { width: 17px; height: 20px; margin-left: 12px; }
.copilot { position: relative; width: 30px; height: 30px; margin-left: 21px; flex: none; }
.copilot svg { width: 30px; height: 26px; display: block; }
.pre { position: absolute; left: 6px; bottom: -2px; width: 23px; height: 10px; background: #f5c518; color: #222; font-size: 7.500px; line-height: 10px; font-weight: 700; text-align: center; border-radius: 2px; letter-spacing: .3px; }
```
